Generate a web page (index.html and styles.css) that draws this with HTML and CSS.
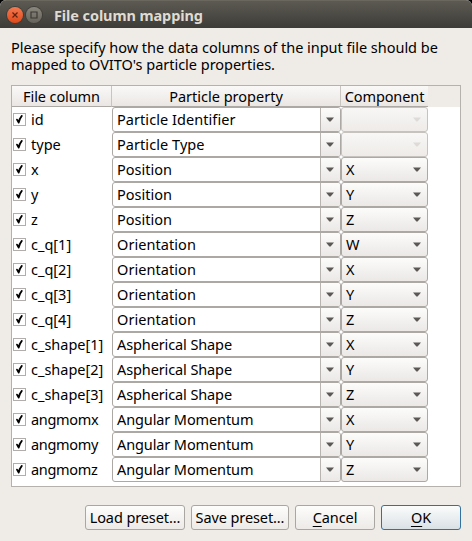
FILE: index.html
```
<!DOCTYPE html>
<html lang="en">
<head>
<meta charset="utf-8">
<title>File column mapping</title>
<link rel="stylesheet" href="styles.css">
</head>
<body>
<div class="dialog">
  <header class="titlebar">
    <span class="win close"><svg width="16" height="16" viewBox="0 0 16 16"><path d="M5.5 5.5l5 5M10.5 5.5l-5 5"/></svg></span>
    <span class="win max"><svg width="16" height="16" viewBox="0 0 16 16"><path d="M5 5h6v6H5z"/></svg></span>
    <h1>File column mapping</h1>
  </header>
  <div class="intro"><div class="line1">Please specify how the data columns of the input file should be</div><div class="line2">mapped to OVITO's particle properties.</div></div>
  <div class="table">
    <div class="head"><span class="h1c">File column</span><span class="h2c">Particle property</span><span class="h3c">Component</span></div>
    <div class="rows" id="rows"></div>
  </div>
  <footer>
    <button class="load">Load preset...</button>
    <button class="save">Save preset...</button>
    <button class="cancel"><u>C</u>ancel</button>
    <button class="ok"><u>O</u>K</button>
  </footer>
</div>
<script src="rows.js"></script>
</body>
</html>
```
FILE: rows.js
```
const mapping = [
  ["id", "Particle Identifier", ""],
  ["type", "Particle Type", ""],
  ["x", "Position", "X"],
  ["y", "Position", "Y"],
  ["z", "Position", "Z"],
  ["c_q[1]", "Orientation", "W"],
  ["c_q[2]", "Orientation", "X"],
  ["c_q[3]", "Orientation", "Y"],
  ["c_q[4]", "Orientation", "Z"],
  ["c_shape[1]", "Aspherical Shape", "X"],
  ["c_shape[2]", "Aspherical Shape", "Y"],
  ["c_shape[3]", "Aspherical Shape", "Z"],
  ["angmomx", "Angular Momentum", "X"],
  ["angmomy", "Angular Momentum", "Y"],
  ["angmomz", "Angular Momentum", "Z"]
];
const arrow = '<svg class="arrow" width="8" height="5" viewBox="0 0 8 5"><path d="M0 .5h8L4.6 4.5H3.4z"/></svg>';
document.getElementById("rows").innerHTML = mapping.map(([name, prop, comp]) => `
  <div class="row">
    <div class="name"><span class="check"><svg width="11" height="11" viewBox="0 0 11 11"><path d="M3 5.6L4.7 8.6C5.2 5.8 6.2 3.8 7.8 1.9"/></svg></span><span class="label ${name.replace(/[^a-z].*/, "")}">${name}</span></div>
    <div class="combo edit"><span class="text ${prop.split(" ").join("-").toLowerCase()}">${prop}</span><span class="drop">${arrow}</span></div>
    <div class="combo pick${comp ? "" : " disabled"}"><span>${comp}</span>${arrow}</div>
  </div>`).join("");
```
FILE: styles.css
```
* { box-sizing: border-box; }
body { margin: 0; background: #000; }
.dialog {
  width: 472px; height: 541px; background: #efebe7; color: #000; overflow: hidden;
  border-radius: 6px 6px 0 0;
  font: 14.5px/17px "Noto Sans", sans-serif;
}
.titlebar {
  height: 28px; display: flex; align-items: center; padding: 0 0 0 7px;
  background: linear-gradient(#5c5a52, #3d3c38);
  border-top: 1px solid #69675e;
}
.win { width: 16px; height: 16px; border-radius: 50%; margin-right: 3px; box-shadow: 0 0 0 1px #403e39; }
.win svg { display: block; fill: none; stroke: #3b3933; stroke-width: 1.2; }
.close { background: linear-gradient(#f4794f, #e0491a); }
.close svg { stroke: #5c2312; }
.max { background: linear-gradient(#8a877d, #65635b); }
h1 { margin: 1px 0 0 9px; font-size: 14.5px; line-height: 18px; font-weight: 700; color: #dfdbd2; white-space: nowrap; letter-spacing: -0.1px; }
.intro { padding-top: 11px; margin-left: 11px; height: 57px; white-space: nowrap; }
.line1, .line2 { letter-spacing: -0.02px; }
.table { margin: 0 11px; width: 450px; height: 402px; border: 1px solid #b5b1ad; background: #fff; }
.head { display: flex; height: 21px; background: #efebe7; line-height: 21px; text-align: center; }
.head span { height: 21px; background: linear-gradient(#faf9f8, #eae6e3); border-bottom: 1px solid #aca8a4; border-right: 1px solid #c8c4c0; white-space: nowrap; }
.head .h1c { width: 100px; letter-spacing: -0.1px; }
.head .h2c { width: 229px; }
.head .h3c { width: 87px; border-right: 0; letter-spacing: -0.1px; }
.row { display: grid; grid-template-columns: 100px 229px 87px; height: 25px; }
.name { display: flex; align-items: center; line-height: 25px; }
.angmomx, .angmomy, .angmomz { letter-spacing: -0.3px; }
.check { width: 13px; height: 13px; border: 1px solid #b1adaa; margin: 0 5px 0 1px; background: #fff; }
.check svg { display: block; fill: none; stroke: #000; stroke-width: 1.8; stroke-linecap: round; stroke-linejoin: round; }
.combo { display: flex; align-items: center; height: 25px; border: 1px solid #aca8a4; border-radius: 3px; line-height: 23px; }
.edit { background: #fff; padding-left: 4px; }
.text { flex: 1; white-space: nowrap; }
.particle-identifier, .particle-type, .orientation { letter-spacing: 0.06px; }
.aspherical-shape, .angular-momentum { letter-spacing: -0.11px; }
.drop { width: 20px; height: 23px; border-left: 1px solid #b8b4b0; padding-right: 1px; background: linear-gradient(#fcfcfb, #ebe8e6); display: flex; align-items: center; justify-content: center; border-radius: 0 2px 2px 0; }
.pick { justify-content: space-between; padding: 0 6px 0 4px; background: linear-gradient(#fcfcfb, #ebe8e6); }
.arrow { fill: #5b5855; display: block; }
.disabled { border-color: #c6c2be; background: linear-gradient(#f8f7f6, #eeebe8); }
.disabled .arrow { fill: #dedad7; }
footer { display: flex; gap: 6px; margin: 18px 11px 0; justify-content: flex-end; }
button { height: 25px; padding: 0; border: 1px solid #aaa6a2; border-radius: 3px; background: linear-gradient(#fdfdfc, #edeae7); font: inherit; line-height: 23px; color: #000; white-space: nowrap; letter-spacing: -0.1px; }
.load { width: 100px; }
.save { width: 98px; }
.cancel, .ok { width: 80px; }
.ok { border-color: #3272a0; background: linear-gradient(#fbfcfc, #dae1e5); }
u { text-underline-offset: 3px; text-decoration-thickness: 1px; text-decoration-skip-ink: none; }
```
